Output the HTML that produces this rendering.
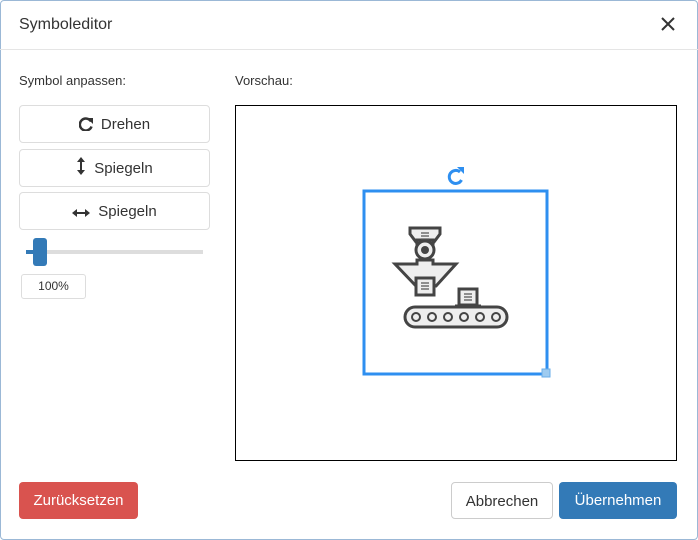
<!DOCTYPE html>
<html><head><style>
body{margin:0;width:698px;height:540px;background:#fff;font-family:"Liberation Sans",sans-serif;color:#333;overflow:hidden;position:relative}
.dlg{position:absolute;left:0;top:0;width:696px;height:538px;border:1px solid #9bb8d6;border-radius:4px}
.hdr{position:absolute;left:0;top:0;width:698px;height:49px;border-bottom:1px solid #e5e5e5}
.t{position:absolute;left:19px;top:16px;font-size:16px}
.lbl{position:absolute;font-size:13px}
.btn{position:absolute;left:19px;height:38px;border:1px solid #ddd;border-radius:4px;font-size:15px;text-align:center;line-height:38px;box-sizing:border-box;width:191px}
.btn svg{vertical-align:-2px;margin-right:8px}
.prev{position:absolute;left:235px;top:105px;width:442px;height:356px;border:1px solid #000;box-sizing:border-box}
.fb{position:absolute;top:482px;height:37px;border-radius:4px;font-size:15px;line-height:37px;text-align:center;box-sizing:border-box}
</style></head><body>
<div class="dlg"></div>
<div class="hdr"><div class="t">Symboleditor</div>
<svg style="position:absolute;left:661px;top:17px" width="14" height="14"><path d="M1 1L13 13M13 1L1 13" stroke="#333" stroke-width="2"/></svg></div>
<div class="lbl" style="left:19px;top:73px">Symbol anpassen:</div>
<div class="lbl" style="left:235px;top:73px">Vorschau:</div>
<div class="btn" style="top:105px"><svg width="14" height="14"><path d="M12 4.5A6 6 0 1 0 12.5 9.5" fill="none" stroke="#333" stroke-width="2.5"/><path d="M8 1h6v6z" fill="#333"/></svg>Drehen</div>
<div class="btn" style="top:149px"><svg width="10" height="18"><path d="M5 3v12" stroke="#333" stroke-width="2"/><path d="M1 5l4-5 4 5zM1 13l4 5 4-5z" fill="#333"/></svg>Spiegeln</div>
<div class="btn" style="top:192px"><svg width="18" height="10"><path d="M3 5h12" stroke="#333" stroke-width="2"/><path d="M5 1l-5 4 5 4zM13 1l5 4-5 4z" fill="#333"/></svg>Spiegeln</div>
<div style="position:absolute;left:26px;top:250px;width:177px;height:4px;background:#ddd"></div>
<div style="position:absolute;left:26px;top:250px;width:8px;height:4px;background:#337ab7"></div>
<div style="position:absolute;left:33px;top:238px;width:14px;height:28px;background:#337ab7;border-radius:3px"></div>
<div style="position:absolute;left:21px;top:274px;width:63px;height:23px;border:1px solid #ddd;border-radius:3px;font-size:12px;text-align:center;line-height:23px">100%</div>
<div class="prev"></div>
<svg style="position:absolute;left:360px;top:160px" width="200" height="220">
<path d="M100 12A6.5 6.5 0 1 0 101.5 20" fill="none" stroke="#2e8ff0" stroke-width="3"/><path d="M97 7h7v7z" fill="#2e8ff0"/>
<rect x="4" y="31" width="183" height="183" fill="none" stroke="#2e8ff0" stroke-width="3"/>
<rect x="182" y="209" width="8" height="8" fill="#9ecbf0" stroke="#6aaee8"/>
<g stroke="#444" stroke-width="3" fill="#eee">
<path d="M50 68h30v6l-6 8h-18l-6-8z"/>
<path d="M57 80h16v5h-16z"/>
<path d="M35 104h22v-4h16v4h23l-20 22h-20z"/>
<circle cx="65" cy="90" r="9"/>
<rect x="56" y="118" width="18" height="17"/>
<rect x="99" y="129" width="18" height="16"/>
<path d="M95 146h26" />
<rect x="45" y="147" width="102" height="20" rx="10"/>
</g>
<circle cx="65" cy="90" r="4" fill="#444"/>
<g stroke="#555" stroke-width="1.2"><path d="M61 73h8M61 76h8M61 79h8M61 123h8M61 126h8M61 129h8M104 134h8M104 137h8M104 140h8"/></g>
<g fill="none" stroke="#444" stroke-width="2">
<circle cx="56" cy="157" r="4"/><circle cx="72" cy="157" r="4"/><circle cx="88" cy="157" r="4"/><circle cx="104" cy="157" r="4"/><circle cx="120" cy="157" r="4"/><circle cx="136" cy="157" r="4"/>
</g>
</svg>
<div class="fb" style="left:19px;width:119px;background:#d9534f;color:#fff">Zurücksetzen</div>
<div class="fb" style="left:451px;width:102px;border:1px solid #ccc">Abbrechen</div>
<div class="fb" style="left:559px;width:118px;background:#337ab7;color:#fff">Übernehmen</div>
</body></html>
